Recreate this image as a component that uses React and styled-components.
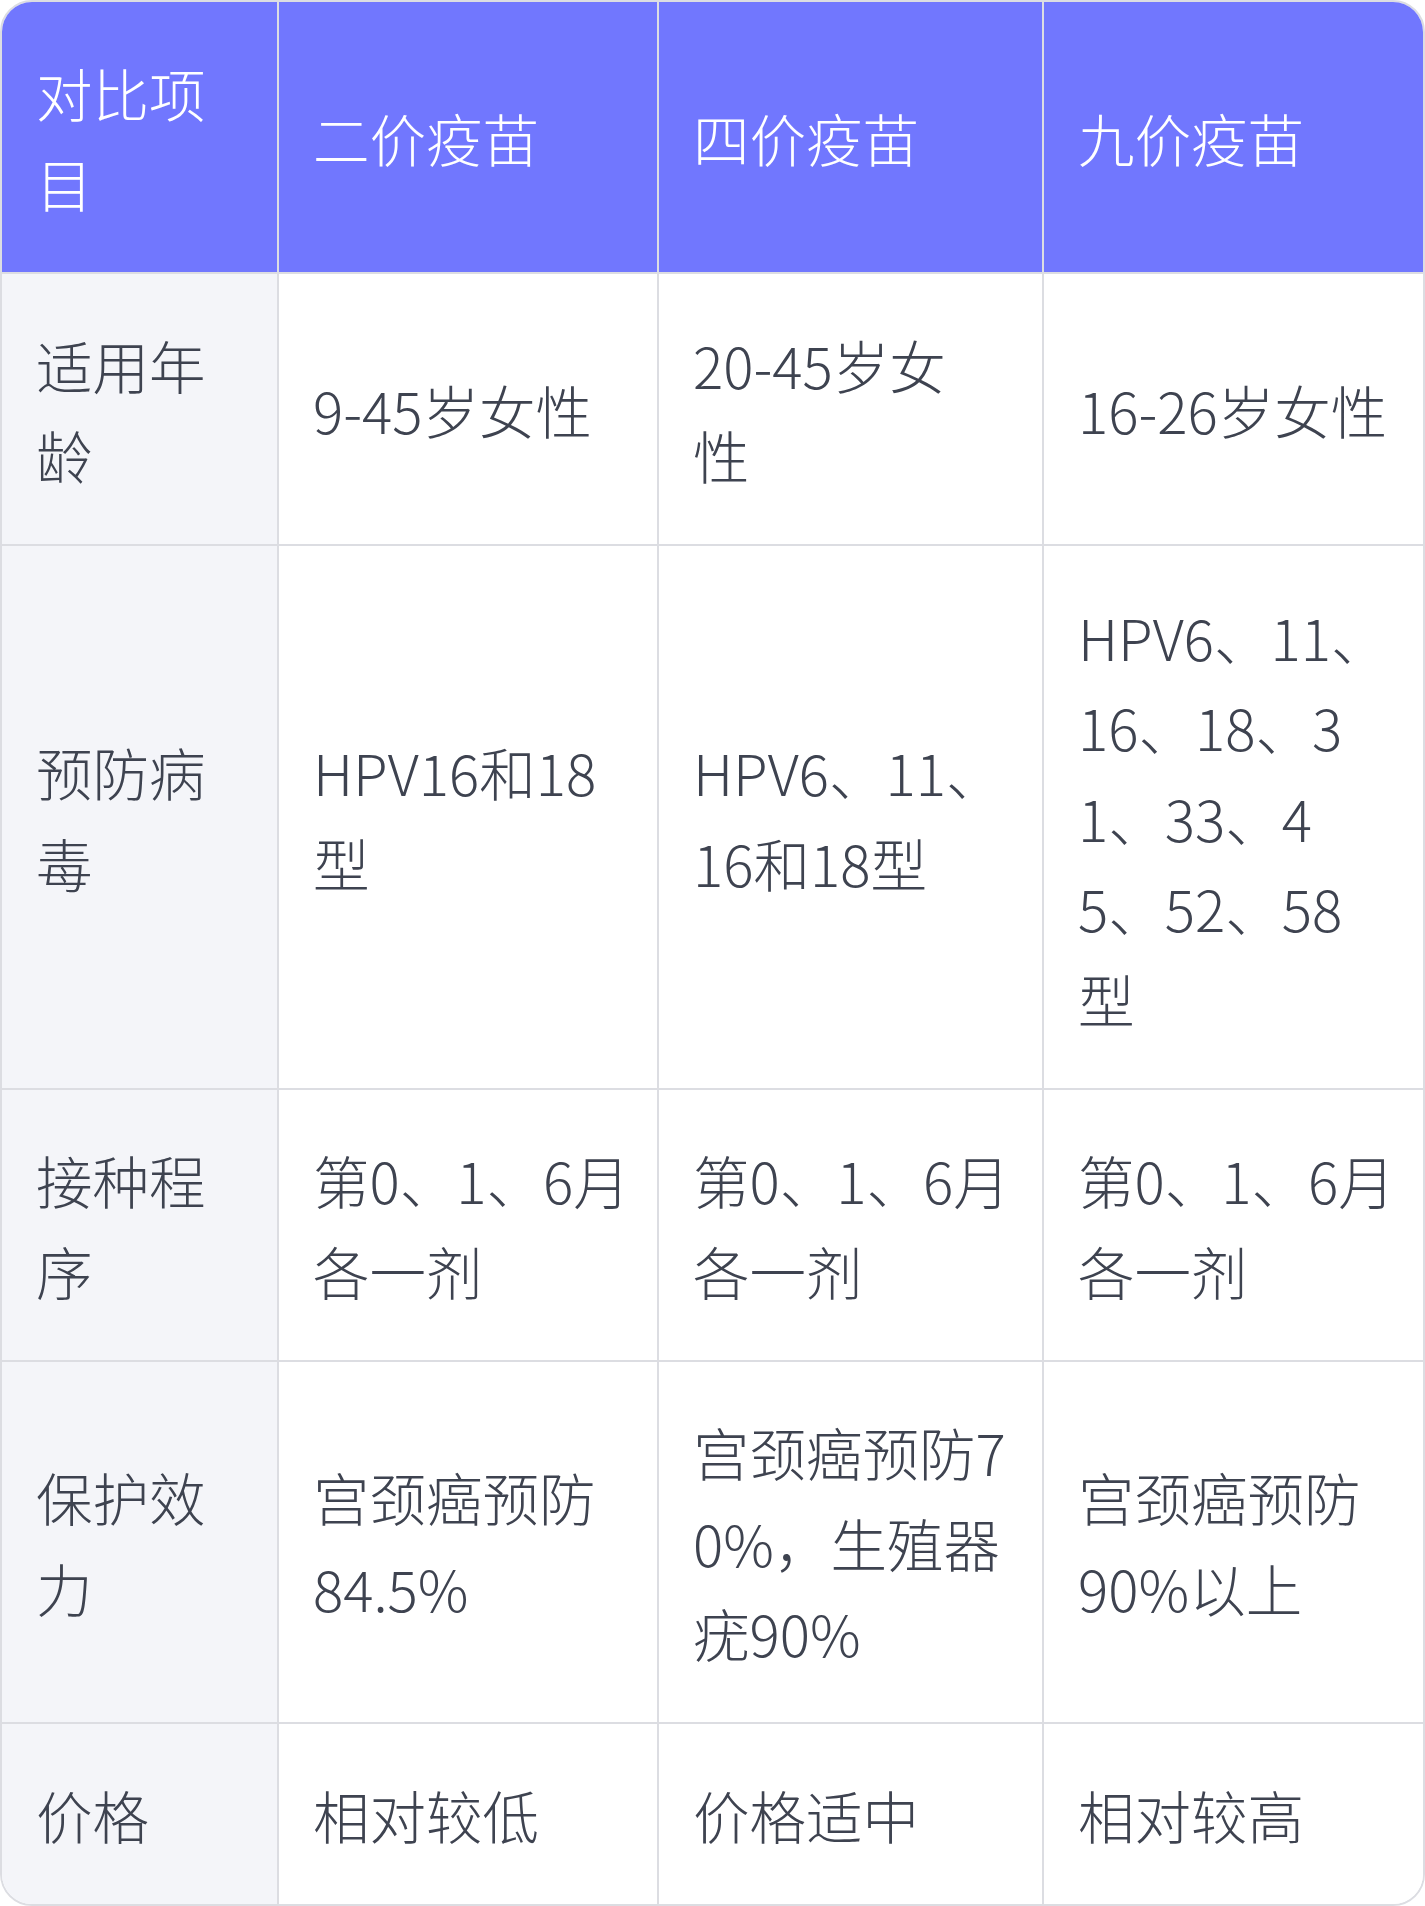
import React from "react";
import styled, { createGlobalStyle } from "styled-components";

const Global = createGlobalStyle`
  html, body { margin: 0; padding: 0; background: #ffffff; }
  * { box-sizing: border-box; }
`;

const Frame = styled.div`
  width: 1425px;
  border: 2px solid #dcdde2;
  border-radius: 32px;
  overflow: hidden;
  background: #ffffff;
  font-family: "Noto Sans CJK SC", "Noto Sans", sans-serif;
  font-weight: 300;
  font-size: 56.5px;
  line-height: 90.5px;
`;

const Grid = styled.div`
  display: grid;
  grid-template-columns: 277px 380px 385px 379px;
`;

const Cell = styled.div`
  display: flex;
  flex-direction: column;
  justify-content: center;
  padding: 44.5px 34px;
  border-right: ${(p) => (p.$lastCol ? "0" : "2px solid #dcdde2")};
  border-bottom: ${(p) => (p.$lastRow ? "0" : "2px solid #dcdde2")};
  background: ${(p) => (p.$head ? "#7177fe" : p.$label ? "#f4f5f9" : "#ffffff")};
  color: ${(p) => (p.$head ? "#ffffff" : "#3e4350")};
`;

const Line = styled.span`
  display: block;
  white-space: nowrap;
`;

const header = [["对比项", "目"], ["二价疫苗"], ["四价疫苗"], ["九价疫苗"]];
const rows = [
  [["适用年", "龄"], ["9-45岁女性"], ["20-45岁女", "性"], ["16-26岁女性"]],
  [
    ["预防病", "毒"],
    ["HPV16和18", "型"],
    ["HPV6、11、", "16和18型"],
    ["HPV6、11、", "16、18、3", "1、33、4", "5、52、58", "型"],
  ],
  [["接种程", "序"], ["第0、1、6月", "各一剂"], ["第0、1、6月", "各一剂"], ["第0、1、6月", "各一剂"]],
  [
    ["保护效", "力"],
    ["宫颈癌预防", "84.5%"],
    ["宫颈癌预防7", "0%，生殖器", "疣90%"],
    ["宫颈癌预防", "90%以上"],
  ],
  [["价格"], ["相对较低"], ["价格适中"], ["相对较高"]],
];

export default function App() {
  return (
    <>
      <Global />
      <Frame>
        <Grid>
          {header.map((lines, i) => (
            <Cell key={"h" + i} $head $lastCol={i === 3}>
              {lines.map((l, k) => (
                <Line key={k}>{l}</Line>
              ))}
            </Cell>
          ))}
          {rows.map((r, ri) =>
            r.map((lines, ci) => (
              <Cell
                key={ri + "-" + ci}
                $label={ci === 0}
                $lastCol={ci === 3}
                $lastRow={ri === rows.length - 1}
              >
                {lines.map((l, k) => (
                  <Line key={k}>{l}</Line>
                ))}
              </Cell>
            ))
          )}
        </Grid>
      </Frame>
    </>
  );
}
